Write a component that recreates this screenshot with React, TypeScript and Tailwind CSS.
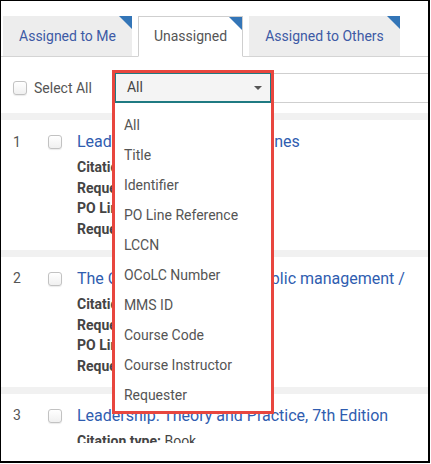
import React from 'react';

const font = { fontFamily: 'Roboto, "Liberation Sans", sans-serif' };

const options = [
  'All',
  'Title',
  'Identifier',
  'PO Line Reference',
  'LCCN',
  'OCoLC Number',
  'MMS ID',
  'Course Code',
  'Course Instructor',
  'Requester',
];

const rows = [
  {
    n: 1,
    title: 'Leadership Theories Guidelines',
    fields: [
      ['Citation type:', 'Book'],
      ['Requested for:', 'Reading list'],
      ['PO Line:', 'POL-10231'],
      ['Requested on:', '12/05/2023'],
    ],
  },
  {
    n: 2,
    title: 'The Oxford handbook of public management /',
    fields: [
      ['Citation type:', 'Book'],
      ['Requested for:', 'Reading list'],
      ['PO Line:', 'POL-10244'],
      ['Requested on:', '12/06/2023'],
    ],
  },
  {
    n: 3,
    title: 'Leadership: Theory and Practice, 7th Edition',
    fields: [
      ['Citation type:', 'Book'],
      ['Requested for:', 'Reading list'],
    ],
  },
];

function Corner() {
  return (
    <svg className="absolute right-0 top-0" width="13" height="13" viewBox="0 0 13 13">
      <polygon points="0,0 13,0 13,13" fill="#3375b7" />
    </svg>
  );
}

function Checkbox() {
  return (
    <span className="inline-block h-[14px] w-[14px] shrink-0 rounded-[3px] border border-[#c2c2c2] bg-gradient-to-b from-white to-[#f0f0f0] shadow-[0_1px_1px_rgba(0,0,0,0.08)]" />
  );
}

export default function App() {
  return (
    <div className="h-[464px] w-[431px] bg-white" style={font}>
      <div className="relative h-[463px] w-[430px] overflow-hidden border-b-2 border-l border-r-2 border-t border-black">
        {/* Tabs */}
        <div className="flex h-[56px] items-end gap-[6px] border-b border-[#d4d4d4] pl-[2px]">
          <div className="relative flex h-[40px] w-[129px] items-center justify-center bg-[#ededed] text-[14px] text-[#3d5aa5]">
            Assigned to Me
            <Corner />
          </div>
          <div className="relative -mb-px flex h-[41px] w-[105px] items-center justify-center border border-b-white border-[#cfcfcf] bg-white text-[14px] text-[#555]">
            Unassigned
            <Corner />
          </div>
          <div className="relative flex h-[40px] w-[151px] items-center justify-center bg-[#ededed] text-[14px] text-[#3d5aa5]">
            Assigned to Others
            <Corner />
          </div>
        </div>

        {/* Toolbar */}
        <div className="flex h-[56px] items-start pt-[16px]">
          <label className="ml-[12px] flex h-[30px] items-center gap-[7px] text-[14px] text-[#555]">
            <Checkbox />
            Select All
          </label>
          <div className="relative ml-[23px] h-[30px] w-[156px] shrink-0">
            <div className="flex h-[30px] items-center justify-between border border-b-2 border-[#1f7a82] bg-[#f4f4f4] pl-[11px] pr-[8px] text-[14px] text-[#444]">
              All
              <svg width="8" height="4" viewBox="0 0 8 4">
                <polygon points="0,0 8,0 4,4" fill="#555" />
              </svg>
            </div>
            <ul className="absolute left-0 right-0 top-[30px] z-10 h-[308px] bg-white pt-[7px] text-[14px] text-[#555]">
              {options.map((o) => (
                <li key={o} className="flex h-[30px] items-center pl-[9px]">
                  {o}
                </li>
              ))}
            </ul>
            <div className="pointer-events-none absolute -left-[3px] -right-[3px] -top-[3px] z-20 h-[344px] border-[3px] border-[#e8463e]" />
          </div>
          <div className="h-[30px] flex-1 border-y border-[#cfcfcf]" />
        </div>

        {/* Results */}
        <div className="h-[330px] overflow-hidden bg-[#f1f1f1] pt-[7px]">
          {rows.map((r) => (
            <div key={r.n} className="mb-[7px] flex bg-white pb-[10px] pt-[11px]">
              <div className="flex h-[22px] w-[47px] shrink-0 items-center pl-[12px] text-[14px] text-[#555]">
                {r.n}
              </div>
              <div className="flex h-[22px] w-[29px] shrink-0 items-center">
                <Checkbox />
              </div>
              <div className="min-w-0 flex-1">
                <div className="flex h-[22px] items-center whitespace-nowrap text-[16px] text-[#2f5db0]">
                  {r.title}
                </div>
                <div className="mt-[4px] text-[14px] leading-[20.7px] text-[#444]">
                  {r.fields.map(([k, v]) => (
                    <div key={k} className="whitespace-nowrap">
                      <span className="font-bold">{k}</span> {v}
                    </div>
                  ))}
                </div>
              </div>
            </div>
          ))}
        </div>
      </div>
    </div>
  );
}
